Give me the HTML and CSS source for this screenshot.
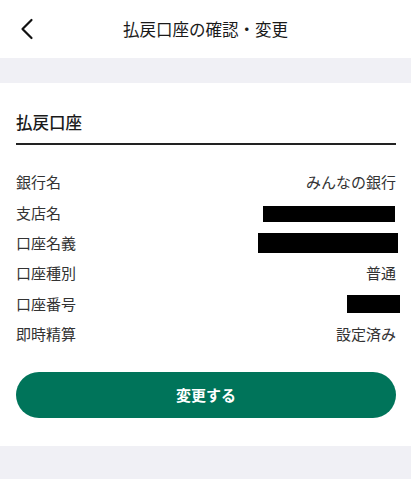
FILE: index.html
```html
<!DOCTYPE html>
<html lang="ja">
<head>
<meta charset="utf-8">
<title>払戻口座の確認・変更</title>
<link rel="stylesheet" href="styles.css">
</head>
<body>
<header class="topbar">
  <button class="back" aria-label="戻る">
    <svg width="14" height="22" viewBox="0 0 14 22"><path d="M11.5 2 L2.5 11 L11.5 20" fill="none" stroke="#111" stroke-width="2.2" stroke-linecap="round" stroke-linejoin="round"/></svg>
  </button>
  <h1 class="title">払戻口座の確認・変更</h1>
</header>
<div class="band"></div>
<main class="card">
  <h2 class="heading">払戻口座</h2>
  <dl class="rows">
    <div class="row"><dt>銀行名</dt><dd>みんなの銀行</dd></div>
    <div class="row"><dt>支店名</dt><dd><span class="mask mask-branch"></span></dd></div>
    <div class="row"><dt>口座名義</dt><dd><span class="mask mask-name"></span></dd></div>
    <div class="row"><dt>口座種別</dt><dd>普通</dd></div>
    <div class="row"><dt>口座番号</dt><dd><span class="mask mask-number"></span></dd></div>
    <div class="row"><dt>即時精算</dt><dd>設定済み</dd></div>
  </dl>
  <button class="primary">変更する</button>
</main>
<div class="band band-bottom"></div>
</body>
</html>
```
FILE: styles.css
```css
* { box-sizing: border-box; }
html, body { margin: 0; padding: 0; background: #fff; }
body {
  font-family: "Noto Sans CJK JP", "Noto Sans", sans-serif;
  color: #222;
  width: 411px;
}
.topbar {
  height: 58px;
  display: flex;
  align-items: center;
  justify-content: center;
  position: relative;
}
.back {
  position: absolute;
  left: 20px;
  top: 18px;
  width: 18px;
  height: 22px;
  padding: 0;
  border: 0;
  background: none;
  display: flex;
  align-items: center;
}
.title {
  margin: 0;
  font-size: 16.5px;
  font-weight: 400;
  line-height: 24px;
  color: #1a1a1a;
}
.band { height: 25px; background: #f0f0f5; }
.band-bottom { height: 34px; }
.card { padding: 26px 15px 27.7px 16px; }
.heading {
  margin: 0;
  font-size: 16.5px;
  font-weight: 500;
  line-height: 26px;
  padding-bottom: 8px;
  border-bottom: 2px solid #222;
  color: #1a1a1a;
}
.rows { margin: 22px 0 22.6px; padding: 0; }
.row {
  height: 30.4px;
  display: flex;
  align-items: center;
  justify-content: space-between;
  font-size: 15px;
  color: #333;
}
.row dt, .row dd { margin: 0; line-height: 20px; }
.row dd { display: flex; align-items: center; }
.mask { display: block; background: #000; }
.mask-branch { width: 132px; height: 16px; margin-top: 2px; margin-right: 1px; }
.mask-name { width: 140px; height: 20px; margin-right: -2px; }
.mask-number { width: 53px; height: 18px; margin-right: -4px; }
.primary {
  display: flex;
  align-items: center;
  justify-content: center;
  width: 100%;
  height: 46px;
  border: 0;
  border-radius: 23px;
  background: #00745a;
  color: #fff;
  font-family: inherit;
  font-size: 15px;
  font-weight: 700;
}
```
